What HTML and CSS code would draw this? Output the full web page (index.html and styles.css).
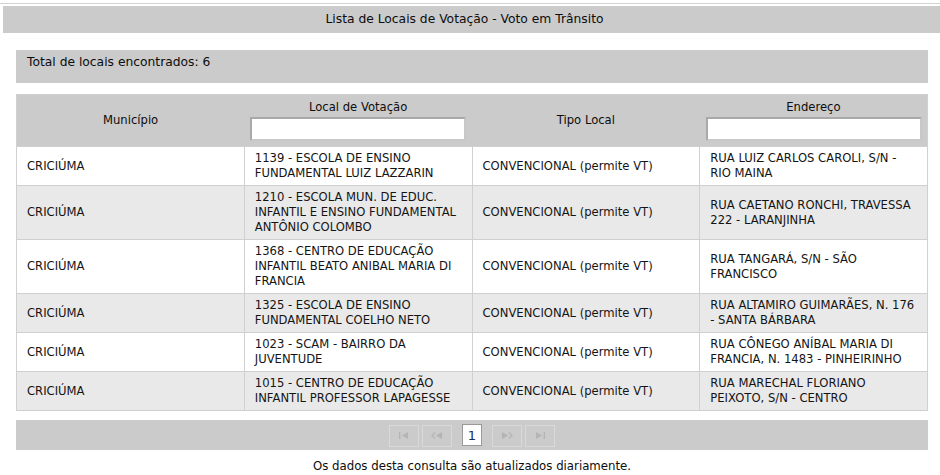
FILE: index.html
```html
<!DOCTYPE html>
<html lang="pt-BR">
<head>
<meta charset="utf-8">
<title>Lista de Locais de Votação - Voto em Trânsito</title>
<link rel="stylesheet" href="styles.css">
</head>
<body>
<div class="topline"></div>
<div class="titlebar">Lista de Locais de Votação - Voto em Trânsito</div>
<div class="content">
  <div class="total">Total de locais encontrados: 6</div>
  <table class="grid">
    <thead>
      <tr>
        <th>Município</th>
        <th><div class="hlabel">Local de Votação</div><input class="filter" type="text"></th>
        <th>Tipo Local</th>
        <th><div class="hlabel">Endereço</div><input class="filter" type="text"></th>
      </tr>
    </thead>
    <tbody>
      <tr>
        <td>CRICIÚMA</td>
        <td>1139 - ESCOLA DE ENSINO FUNDAMENTAL LUIZ LAZZARIN</td>
        <td>CONVENCIONAL (permite VT)</td>
        <td>RUA LUIZ CARLOS CAROLI, S/N - RIO MAINA</td>
      </tr>
      <tr class="alt">
        <td>CRICIÚMA</td>
        <td>1210 - ESCOLA MUN. DE EDUC. INFANTIL E ENSINO FUNDAMENTAL ANTÔNIO COLOMBO</td>
        <td>CONVENCIONAL (permite VT)</td>
        <td>RUA CAETANO RONCHI, TRAVESSA 222 - LARANJINHA</td>
      </tr>
      <tr>
        <td>CRICIÚMA</td>
        <td>1368 - CENTRO DE EDUCAÇÃO INFANTIL BEATO ANIBAL MARIA DI FRANCIA</td>
        <td>CONVENCIONAL (permite VT)</td>
        <td>RUA TANGARÁ, S/N - SÃO FRANCISCO</td>
      </tr>
      <tr class="alt">
        <td>CRICIÚMA</td>
        <td>1325 - ESCOLA DE ENSINO FUNDAMENTAL COELHO NETO</td>
        <td>CONVENCIONAL (permite VT)</td>
        <td>RUA ALTAMIRO GUIMARÃES, N. 176 - SANTA BÁRBARA</td>
      </tr>
      <tr>
        <td>CRICIÚMA</td>
        <td>1023 - SCAM - BAIRRO DA JUVENTUDE</td>
        <td>CONVENCIONAL (permite VT)</td>
        <td>RUA CÔNEGO ANÍBAL MARIA DI FRANCIA, N. 1483 - PINHEIRINHO</td>
      </tr>
      <tr class="alt">
        <td>CRICIÚMA</td>
        <td>1015 - CENTRO DE EDUCAÇÃO INFANTIL PROFESSOR LAPAGESSE</td>
        <td>CONVENCIONAL (permite VT)</td>
        <td>RUA MARECHAL FLORIANO PEIXOTO, S/N - CENTRO</td>
      </tr>
    </tbody>
  </table>
  <div class="pager">
    <span class="pbtn" title="Primeira"><svg width="10" height="7" viewBox="0 0 10 7"><rect x="0" y="0" width="1.4" height="7" fill="#b4b4b4"/><polygon points="3,3.5 9,0 9,7" fill="#b4b4b4"/></svg></span>
    <span class="pbtn" title="Anterior"><svg width="12" height="7" viewBox="0 0 12 7"><polyline points="4,0.5 1,3.5 4,6.5" fill="none" stroke="#b4b4b4" stroke-width="1.2"/><polygon points="5,3.5 11,0 11,7" fill="#b4b4b4"/></svg></span>
    <span class="pcur">1</span>
    <span class="pbtn" title="Próxima"><svg width="12" height="7" viewBox="0 0 12 7"><polygon points="1,0 7,3.5 1,7" fill="#b4b4b4"/><polyline points="8,0.5 11,3.5 8,6.5" fill="none" stroke="#b4b4b4" stroke-width="1.2"/></svg></span>
    <span class="pbtn" title="Última"><svg width="10" height="7" viewBox="0 0 10 7"><polygon points="1,0 7,3.5 1,7" fill="#b4b4b4"/><rect x="8.6" y="0" width="1.4" height="7" fill="#b4b4b4"/></svg></span>
  </div>
  <p class="note">Os dados desta consulta são atualizados diariamente.</p>
</div>
</body>
</html>
```

FILE: styles.css
```css
html, body {
  margin: 0;
  padding: 0;
  background: #ffffff;
}
body {
  font-family: "DejaVu Sans", Verdana, sans-serif;
  color: #111;
}
.topline {
  height: 1px;
  margin-top: 3px;
  background: #d2d2d2;
}
.titlebar {
  margin: 2px 0 0 3px;
  height: 27px;
  line-height: 27px;
  background: #cbcbcb;
  text-align: center;
  font-size: 12.3px;
  color: #0d0d0d;
  padding-right: 14px;
}
.content {
  margin: 17px 12px 0 16px;
}
.total {
  height: 33px;
  box-sizing: border-box;
  padding: 5px 11px 0;
  line-height: 15px;
  background: #cbcbcb;
  font-size: 12.3px;
  color: #0d0d0d;
}
.grid {
  margin-top: 11px;
  width: 100%;
  border-collapse: collapse;
  table-layout: fixed;
  font-size: 11.6px;
  border: 1px solid #d0d0d0;
}
.grid th {
  background: #cbcbcb;
  font-weight: normal;
  color: #0d0d0d;
  text-align: center;
  vertical-align: middle;
  padding: 4px 6px 5px;
  height: 42px;
  line-height: 15px;
}
.hlabel {
  line-height: 15px;
  margin-bottom: 2px;
}
.filter {
  display: block;
  width: 216px;
  height: 24px;
  box-sizing: border-box;
  margin: 0 auto;
  border: 2px solid #a9a9a9;
  border-bottom-color: #c8c8c8;
  border-right-color: #c8c8c8;
  background: #fff;
  padding: 0 3px;
  font: inherit;
}
.grid td {
  border: 1px solid #d0d0d0;
  padding: 4px 10px 4px 10px;
  line-height: 15px;
  vertical-align: middle;
  color: #141414;
  background: #fff;
}
.grid tr.alt td {
  background: #e9e9e9;
}
.pager {
  margin-top: 9px;
  height: 30px;
  background: #cbcbcb;
  display: flex;
  justify-content: center;
  align-items: center;
  gap: 3px;
}
.pbtn {
  width: 30px;
  height: 22px;
  box-sizing: border-box;
  border: 1px solid #d9d9d9;
  display: flex;
  align-items: center;
  justify-content: center;
  margin-top: 1px;
}
.pcur {
  width: 20px;
  height: 22px;
  box-sizing: border-box;
  border: 1px solid #9a9a9a;
  background: #fff;
  display: flex;
  align-items: center;
  justify-content: center;
  font-size: 13px;
  color: #1c2a5a;
  margin: 0 7px;
}
.note {
  margin: 9px 0 0;
  text-align: center;
  font-size: 11.75px;
  color: #0d0d0d;
  line-height: 15px;
}
```
